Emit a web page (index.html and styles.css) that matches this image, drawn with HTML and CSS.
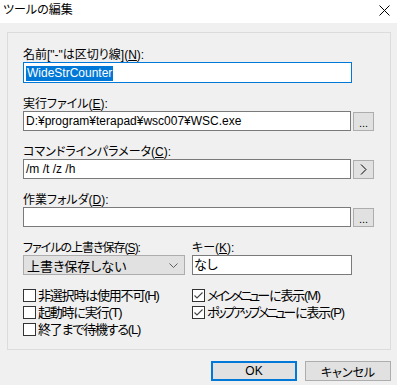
FILE: index.html
```html
<!DOCTYPE html>
<html lang="ja">
<head>
    <meta charset="UTF-8">
    <title>ツールの編集</title>
    <link rel="stylesheet" href="styles.css">
</head>
<body>
    <div class="window">
        <div class="titlebar">
            <span class="title">ツールの編集</span>
            <svg class="close" width="11" height="11" viewBox="0 0 11 11">
                <path d="M0.5 0.5 L10.5 10.5 M10.5 0.5 L0.5 10.5" stroke="#000" stroke-width="1" fill="none"/>
            </svg>
        </div>

        <div class="group">
            <div class="field">
                <div class="label">名前["-"は区切り線](<u>N</u>):</div>
                <div class="edit edit-name focused"><span class="selected">WideStrCounter</span></div>
            </div>

            <div class="field">
                <div class="label">実行ファイル(<u>E</u>):</div>
                <div class="row">
                    <div class="edit">D:¥program¥terapad¥wsc007¥WSC.exe</div>
                    <button class="small-btn">...</button>
                </div>
            </div>

            <div class="field">
                <div class="label">コマンドラインパラメータ(<u>C</u>):</div>
                <div class="row">
                    <div class="edit">/m /t /z /h</div>
                    <button class="small-btn">
                        <svg width="7" height="11" viewBox="0 0 7 11">
                            <path d="M1 0.5 L6 5.5 L1 10.5" stroke="#000" stroke-width="1" fill="none"/>
                        </svg>
                    </button>
                </div>
            </div>

            <div class="field">
                <div class="label">作業フォルダ(<u>D</u>):</div>
                <div class="row">
                    <div class="edit"></div>
                    <button class="small-btn">...</button>
                </div>
            </div>

            <div class="cols">
                <div>
                    <div class="label tight">ファイルの上書き保存(<u>S</u>):</div>
                    <div class="combo">
                        <span>上書き保存しない</span>
                        <svg width="9" height="5" viewBox="0 0 9 5">
                            <path d="M0.5 0.5 L4.5 4.5 L8.5 0.5" stroke="#606060" stroke-width="1" fill="none"/>
                        </svg>
                    </div>
                </div>
                <div>
                    <div class="label">キー(<u>K</u>):</div>
                    <div class="edit edit-key">なし</div>
                </div>
            </div>

            <div class="cols checks">
                <div>
                    <div class="check"><span class="box"></span>非選択時は使用不可(H)</div>
                    <div class="check"><span class="box"></span>起動時に実行(T)</div>
                    <div class="check"><span class="box"></span>終了まで待機する(L)</div>
                </div>
                <div>
                    <div class="check"><span class="box"><svg width="11" height="11" viewBox="0 0 11 11"><path d="M1.5 5.5 L4 8 L9.5 2.5" stroke="#444" stroke-width="1.1" fill="none"/></svg></span><span class="kana">メインメニュー</span>に表示(M)</div>
                    <div class="check"><span class="box"><svg width="11" height="11" viewBox="0 0 11 11"><path d="M1.5 5.5 L4 8 L9.5 2.5" stroke="#444" stroke-width="1.1" fill="none"/></svg></span><span class="kana">ポップアップメニュー</span>に表示(P)</div>
                </div>
            </div>
        </div>

        <div class="buttons">
            <button class="btn default">OK</button>
            <button class="btn">キャンセル</button>
        </div>
    </div>
</body>
</html>
```

FILE: styles.css
```css
* {
    margin: 0;
    padding: 0;
    box-sizing: border-box;
}

body {
    width: 397px;
    height: 385px;
    background: #f0f0f0;
    font-family: "Liberation Sans", "Noto Sans CJK JP", sans-serif;
    font-size: 12px;
    font-feature-settings: "palt";
    color: #000;
    overflow: hidden;
}

.titlebar {
    height: 23px;
    background: #fff;
    display: flex;
    align-items: flex-start;
}

.title {
    padding: 2px 0 0 3px;
    line-height: 16px;
}

.close {
    margin: 5px 7px 0 auto;
}

.group {
    margin: 9px 0 0 7px;
    width: 384px;
    height: 318px;
    border: 1px solid #dcdcdc;
    padding: 15px 16px 0 15px;
}

.label {
    height: 14px;
    line-height: 14px;
    white-space: nowrap;
}

.label.tight {
    letter-spacing: -1px;
}

.label u {
    text-underline-offset: 1px;
}

.field {
    margin-bottom: 14px;
}

.row {
    display: flex;
    gap: 2px;
}

.edit {
    width: 329px;
    height: 20px;
    background: #fff;
    border: 1px solid #7a7a7a;
    padding: 0 2px;
    line-height: 18px;
    white-space: nowrap;
    overflow: hidden;
}

.edit.focused {
    border-color: #0078d7;
}

.edit-name {
    height: 21px;
    padding-top: 1px;
}

.selected {
    display: inline-block;
    background: #0078d7;
    color: #fff;
    line-height: 15px;
    padding: 0 1px;
}

.small-btn {
    width: 21px;
    height: 19px;
    margin-top: 1px;
    background: #e1e1e1;
    border: 1px solid #adadad;
    font-family: inherit;
    font-size: 11px;
    display: flex;
    align-items: center;
    justify-content: center;
    line-height: 1;
    padding-top: 3px;
}

.small-btn svg {
    margin-top: -3px;
}

.cols {
    display: grid;
    grid-template-columns: 162px 160px;
    column-gap: 7px;
}

.combo {
    height: 20px;
    background: #e1e1e1;
    border: 1px solid #adadad;
    display: flex;
    align-items: center;
    justify-content: space-between;
    padding: 0 6px 0 3px;
    font-size: 13px;
}

.edit-key {
    width: 160px;
    padding-left: 1px;
    font-size: 13px;
}

.checks {
    margin-top: 14px;
}

.check {
    height: 17px;
    line-height: 13px;
    display: flex;
    align-items: flex-start;
    gap: 2px;
    white-space: nowrap;
    font-size: 13px;
    letter-spacing: -1.2px;
}

.check .kana {
    letter-spacing: -3px;
}

.box {
    width: 13px;
    height: 13px;
    border: 1px solid #333;
    background: #fff;
    flex: none;
    display: flex;
    align-items: center;
    justify-content: center;
}

.buttons {
    display: flex;
    justify-content: flex-end;
    gap: 8px;
    margin-top: 11px;
    padding-right: 6px;
}

.btn {
    width: 86px;
    height: 20px;
    background: #e1e1e1;
    border: 1px solid #adadad;
    font-family: inherit;
    font-size: 12px;
    font-feature-settings: "palt";
    color: #000;
}

.btn.default {
    border: 2px solid #0078d7;
}
```
